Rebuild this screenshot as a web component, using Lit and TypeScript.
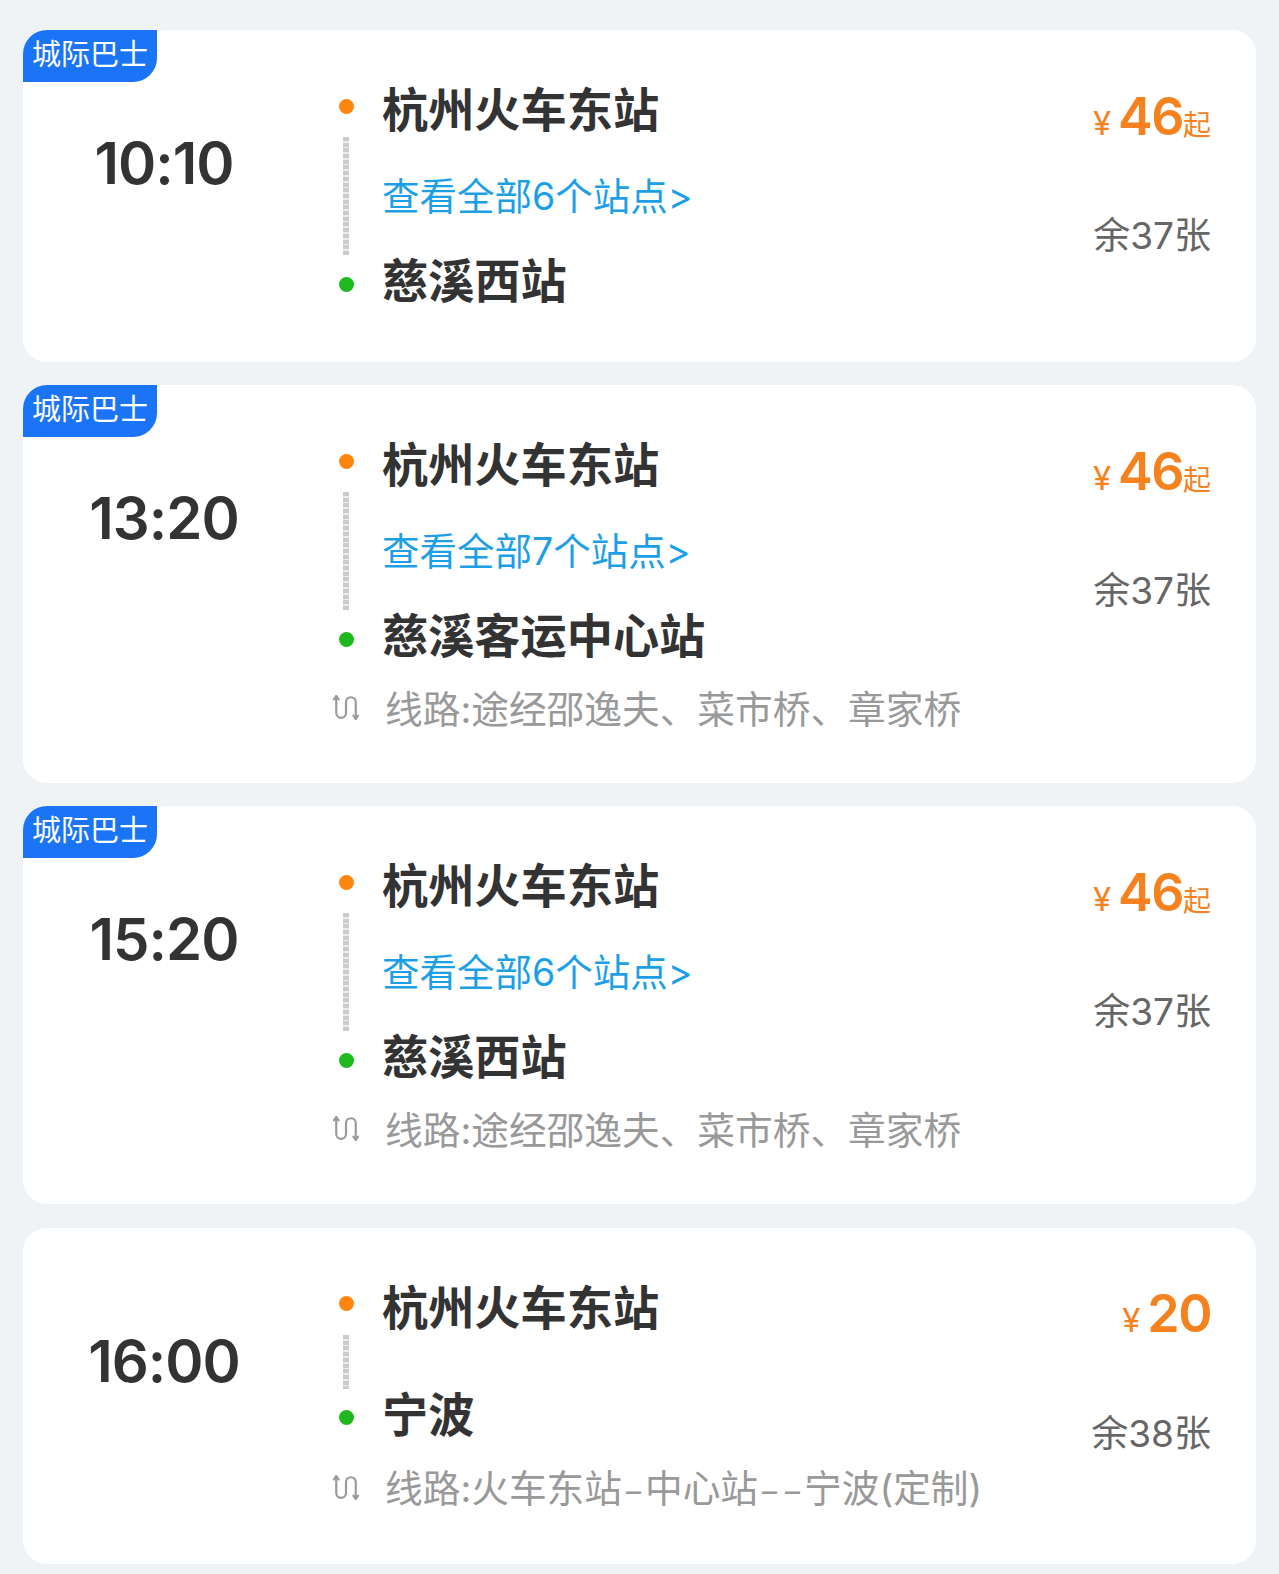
import { LitElement, html, css, nothing } from "lit";
import { customElement } from "lit/decorators.js";

type Trip = {
  time: string; tag: boolean; from: string; to: string; link?: string; route?: string;
  price: string; qi: boolean; left: string;
};

const trips: Trip[] = [
  { time: "10:10", tag: true, from: "杭州火车东站", to: "慈溪西站", link: "查看全部6个站点>", price: "46", qi: true, left: "余37张" },
  { time: "13:20", tag: true, from: "杭州火车东站", to: "慈溪客运中心站", link: "查看全部7个站点>", route: "线路:途经邵逸夫、菜市桥、章家桥", price: "46", qi: true, left: "余37张" },
  { time: "15:20", tag: true, from: "杭州火车东站", to: "慈溪西站", link: "查看全部6个站点>", route: "线路:途经邵逸夫、菜市桥、章家桥", price: "46", qi: true, left: "余37张" },
  { time: "16:00", tag: false, from: "杭州火车东站", to: "宁波", route: "线路:火车东站–中心站––宁波(定制)", price: "20", qi: false, left: "余38张" },
];

@customElement("app-root")
export class AppRoot extends LitElement {
  static styles = css`
    :host {
      display: block;
      min-height: 1574px;
      background: #eff3f6;
      font-family: "Inter", "Noto Sans CJK SC", sans-serif;
      font-variant-ligatures: none;
      font-feature-settings: "calt" 0;
      color: #333;
    }
    .list { display: flex; flex-direction: column; gap: 23.7px; padding: 30px 23px 12px; }
    .card {
      position: relative;
      display: grid;
      grid-template-columns: 282px 1fr auto;
      background: #fff;
      border-radius: 24px;
      padding: 0 45px 51.5px 0;
    }
    .tag {
      position: absolute; left: 0; top: 0;
      width: 134px; height: 52px;
      padding-bottom: 4px; box-sizing: border-box;
      display: flex; align-items: center; justify-content: center;
      background: #1a74f5; color: #fff;
      font-size: 29px; line-height: 1;
      border-radius: 24px 0 24px 0;
    }
    .time {
      padding-top: 98px;
      text-align: center;
      font-size: 58px; line-height: 70px; font-weight: 600;
      letter-spacing: -1px;
    }
    .route { padding: 50px 0 0 29px; display: flex; flex-direction: column; }
    .row { display: grid; grid-template-columns: 24px 1fr; column-gap: 24px; align-items: center; }
    .dot { width: 15px; height: 15px; border-radius: 50%; justify-self: center; }
    .dot.o { background: #ff8410; margin-bottom: 6px; }
    .dot.g { background: #1fb91f; margin-top: 6px; }
    .station { font-size: 46.2px; line-height: 58px; font-weight: 700; white-space: nowrap; }
    .station.from { padding-top: 2px; line-height: 56px; }
    .mid { min-height: 50px; }
    .mid.tall { min-height: 114px; }
    .line {
      justify-self: center; align-self: stretch;
      width: 6px; margin: -1px 0 -3px;
      background: repeating-linear-gradient(#cbcbcb 0 4px, #ececec 4px 5.7px);
    }
    .link { color: #1d9fe6; font-size: 37.5px; line-height: 50px; white-space: nowrap; margin-top: 4px; }
    .via { margin-top: 22px; }
    .via svg { justify-self: center; display: block; margin-bottom: 3px; }
    .via .text { color: #999; font-size: 37.7px; line-height: 44px; white-space: nowrap; padding-left: 3px; }
    .dash { font-size: 30px; padding: 0 4px; }
    .right { padding-top: 56.5px; display: flex; flex-direction: column; align-items: flex-end; }
    .price {
      display: flex; align-items: baseline; height: 60px; line-height: 60px;
      color: #f5821f;
    }
    .yen { font-size: 33px; margin-right: 7px; }
    .num { font-size: 52px; font-weight: 600; letter-spacing: -1.5px; }
    .qi { font-size: 28px; }
    .left { margin-top: 64.5px; color: #666; font-size: 37px; line-height: 50px; white-space: nowrap; }
  `;

  private icon() {
    return html`<svg width="26" height="29" viewBox="0 0 24 26" fill="none" stroke="#9a9a9a" stroke-width="2" stroke-linecap="round" stroke-linejoin="round">
      <path d="M3 2.5V18a4.5 4.5 0 0 0 9 0V8a4.5 4.5 0 0 1 9 0v15.5" />
      <path d="M.8 5.5 3 2.5l2.2 3M18.8 20.5l2.2 3 2.2-3" />
    </svg>`;
  }

  private routeText(text: string) {
    return text.split(/(–)/).map((part) =>
      part === "–" ? html`<span class="dash">–</span>` : part
    );
  }

  render() {
    return html`<div class="list">
      ${trips.map((t) => html`<div class="card">
        ${t.tag ? html`<div class="tag">城际巴士</div>` : nothing}
        <div class="time">${t.time}</div>
        <div class="route">
          <div class="row"><i class="dot o"></i><div class="station from">${t.from}</div></div>
          <div class="row mid ${t.link ? "tall" : ""}"><i class="line"></i>${t.link ? html`<div class="link">${t.link}</div>` : nothing}</div>
          <div class="row"><i class="dot g"></i><div class="station">${t.to}</div></div>
          ${t.route ? html`<div class="row via">${this.icon()}<div class="text">${this.routeText(t.route)}</div></div>` : nothing}
        </div>
        <div class="right">
          <div class="price"><span class="yen">¥</span><span class="num">${t.price}</span>${t.qi ? html`<span class="qi">起</span>` : nothing}</div>
          <div class="left">${t.left}</div>
        </div>
      </div>`)}
    </div>`;
  }
}
